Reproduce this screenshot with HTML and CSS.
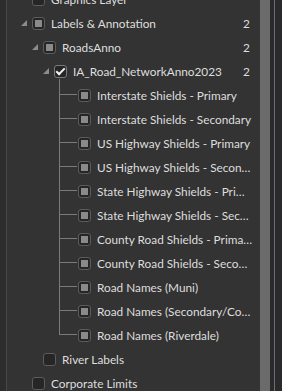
FILE: index.html
```html
<!DOCTYPE html>
<html lang="en">
<head>
    <meta charset="UTF-8">
    <title>Contents</title>
    <link rel="stylesheet" href="styles.css">
</head>
<body>
<div class="frame">
    <div class="edge"></div>
    <div class="panel">
        <div class="tree">
            <div class="row lvl0">
                <span class="twisty none"></span>
                <span class="check"></span>
                <span class="name">Graphics Layer</span>
            </div>
            <div class="row lvl0 has-count">
                <span class="twisty"></span>
                <span class="check part"></span>
                <span class="name">Labels &amp; Annotation</span>
                <span class="count">2</span>
            </div>
            <div class="row lvl1 has-count">
                <span class="twisty"></span>
                <span class="check part"></span>
                <span class="name">RoadsAnno</span>
                <span class="count">2</span>
            </div>
            <div class="row lvl2 has-count">
                <span class="twisty"></span>
                <span class="check on"></span>
                <span class="name">IA_Road_NetworkAnno2023</span>
                <span class="count">2</span>
            </div>
            <div class="children">
                <div class="row leaf"><span class="check part"></span><span class="name">Interstate Shields - Primary</span></div>
                <div class="row leaf"><span class="check part"></span><span class="name">Interstate Shields - Secondary</span></div>
                <div class="row leaf"><span class="check part"></span><span class="name">US Highway Shields - Primary</span></div>
                <div class="row leaf"><span class="check part"></span><span class="name">US Highway Shields - Secondary</span></div>
                <div class="row leaf"><span class="check part"></span><span class="name">State Highway Shields - Primary</span></div>
                <div class="row leaf"><span class="check part"></span><span class="name">State Highway Shields - Secondary</span></div>
                <div class="row leaf"><span class="check part"></span><span class="name">County Road Shields - Primary</span></div>
                <div class="row leaf"><span class="check part"></span><span class="name">County Road Shields - Secondary</span></div>
                <div class="row leaf"><span class="check part"></span><span class="name">Road Names (Muni)</span></div>
                <div class="row leaf"><span class="check part"></span><span class="name">Road Names (Secondary/County)</span></div>
                <div class="row leaf"><span class="check part"></span><span class="name">Road Names (Riverdale)</span></div>
            </div>
            <div class="row lvl1">
                <span class="twisty none"></span>
                <span class="check"></span>
                <span class="name">River Labels</span>
            </div>
            <div class="row lvl0">
                <span class="twisty none"></span>
                <span class="check"></span>
                <span class="name">Corporate Limits</span>
            </div>
        </div>
    </div>
    <div class="scrollbar"><div class="thumb"></div></div>
    <div class="side"><div class="side-line"></div></div>
</div>
</body>
</html>
```

FILE: styles.css
```css
body {
    margin: 0;
    background-color: #2b2b2b;
    font-family: Lato, "Liberation Sans", sans-serif;
    font-size: 11.8px;
    color: #dedede;
}
.frame {
    display: flex;
    height: 391px;
    overflow: hidden;
}
.edge {
    width: 6px;
    background-color: #2d2d2d;
    border-right: 1px solid #474747;
}
.panel {
    width: 253px;
    background-color: #333333;
    overflow: hidden;
}
.tree {
    margin-top: -13px;
}
.row {
    display: flex;
    align-items: center;
    height: 24px;
    padding-right: 7px;
    white-space: nowrap;
}
.row.has-count {
    padding-right: 5px;
}
.lvl0 { padding-left: 14px; }
.lvl1 { padding-left: 25px; }
.lvl2 { padding-left: 36px; }
.leaf { padding-left: 71px; position: relative; }

.twisty {
    width: 11px;
    height: 13px;
    flex: 0 0 11px;
    position: relative;
}
.twisty::before {
    content: "";
    position: absolute;
    left: 0;
    top: 3px;
    width: 0;
    height: 0;
    border-left: 6px solid transparent;
    border-bottom: 6px solid #8c8c8c;
}
.twisty.none::before {
    display: none;
}

.check {
    flex: 0 0 13px;
    width: 13px;
    height: 13px;
    box-sizing: border-box;
    border: 1px solid #5c5c5c;
    border-radius: 3px;
    background-color: #262626;
    margin-right: 6px;
    position: relative;
}
.check.part::after {
    content: "";
    position: absolute;
    left: 2px;
    top: 2px;
    width: 7px;
    height: 7px;
    background-color: #8a8a8a;
}
.check.on {
    border-color: #7a7a7a;
}
.check.on::after {
    content: "";
    position: absolute;
    left: 3px;
    top: 0px;
    width: 3px;
    height: 7px;
    border-right: 2px solid #f2f2f2;
    border-bottom: 2px solid #f2f2f2;
    transform: rotate(45deg);
}

.name {
    flex: 1;
    overflow: hidden;
    text-overflow: ellipsis;
}
.count {
    width: 12px;
    text-align: left;
}

.children {
    position: relative;
}
.children::before {
    content: "";
    position: absolute;
    left: 52px;
    top: -4px;
    bottom: 12px;
    width: 1px;
    background-color: #7a7a7a;
}
.leaf::before {
    content: "";
    position: absolute;
    left: 53px;
    top: 11px;
    width: 17px;
    height: 1px;
    background-color: #7a7a7a;
}

.scrollbar {
    width: 10px;
    background-color: #2e2e2e;
}
.thumb {
    height: 100%;
    background-color: #6b6b6b;
}
.side {
    width: 12px;
    background-color: #2a2a2a;
    display: flex;
    padding-left: 4px;
    box-sizing: border-box;
}
.side-line {
    width: 1px;
    background-color: #6d6d78;
}
```
